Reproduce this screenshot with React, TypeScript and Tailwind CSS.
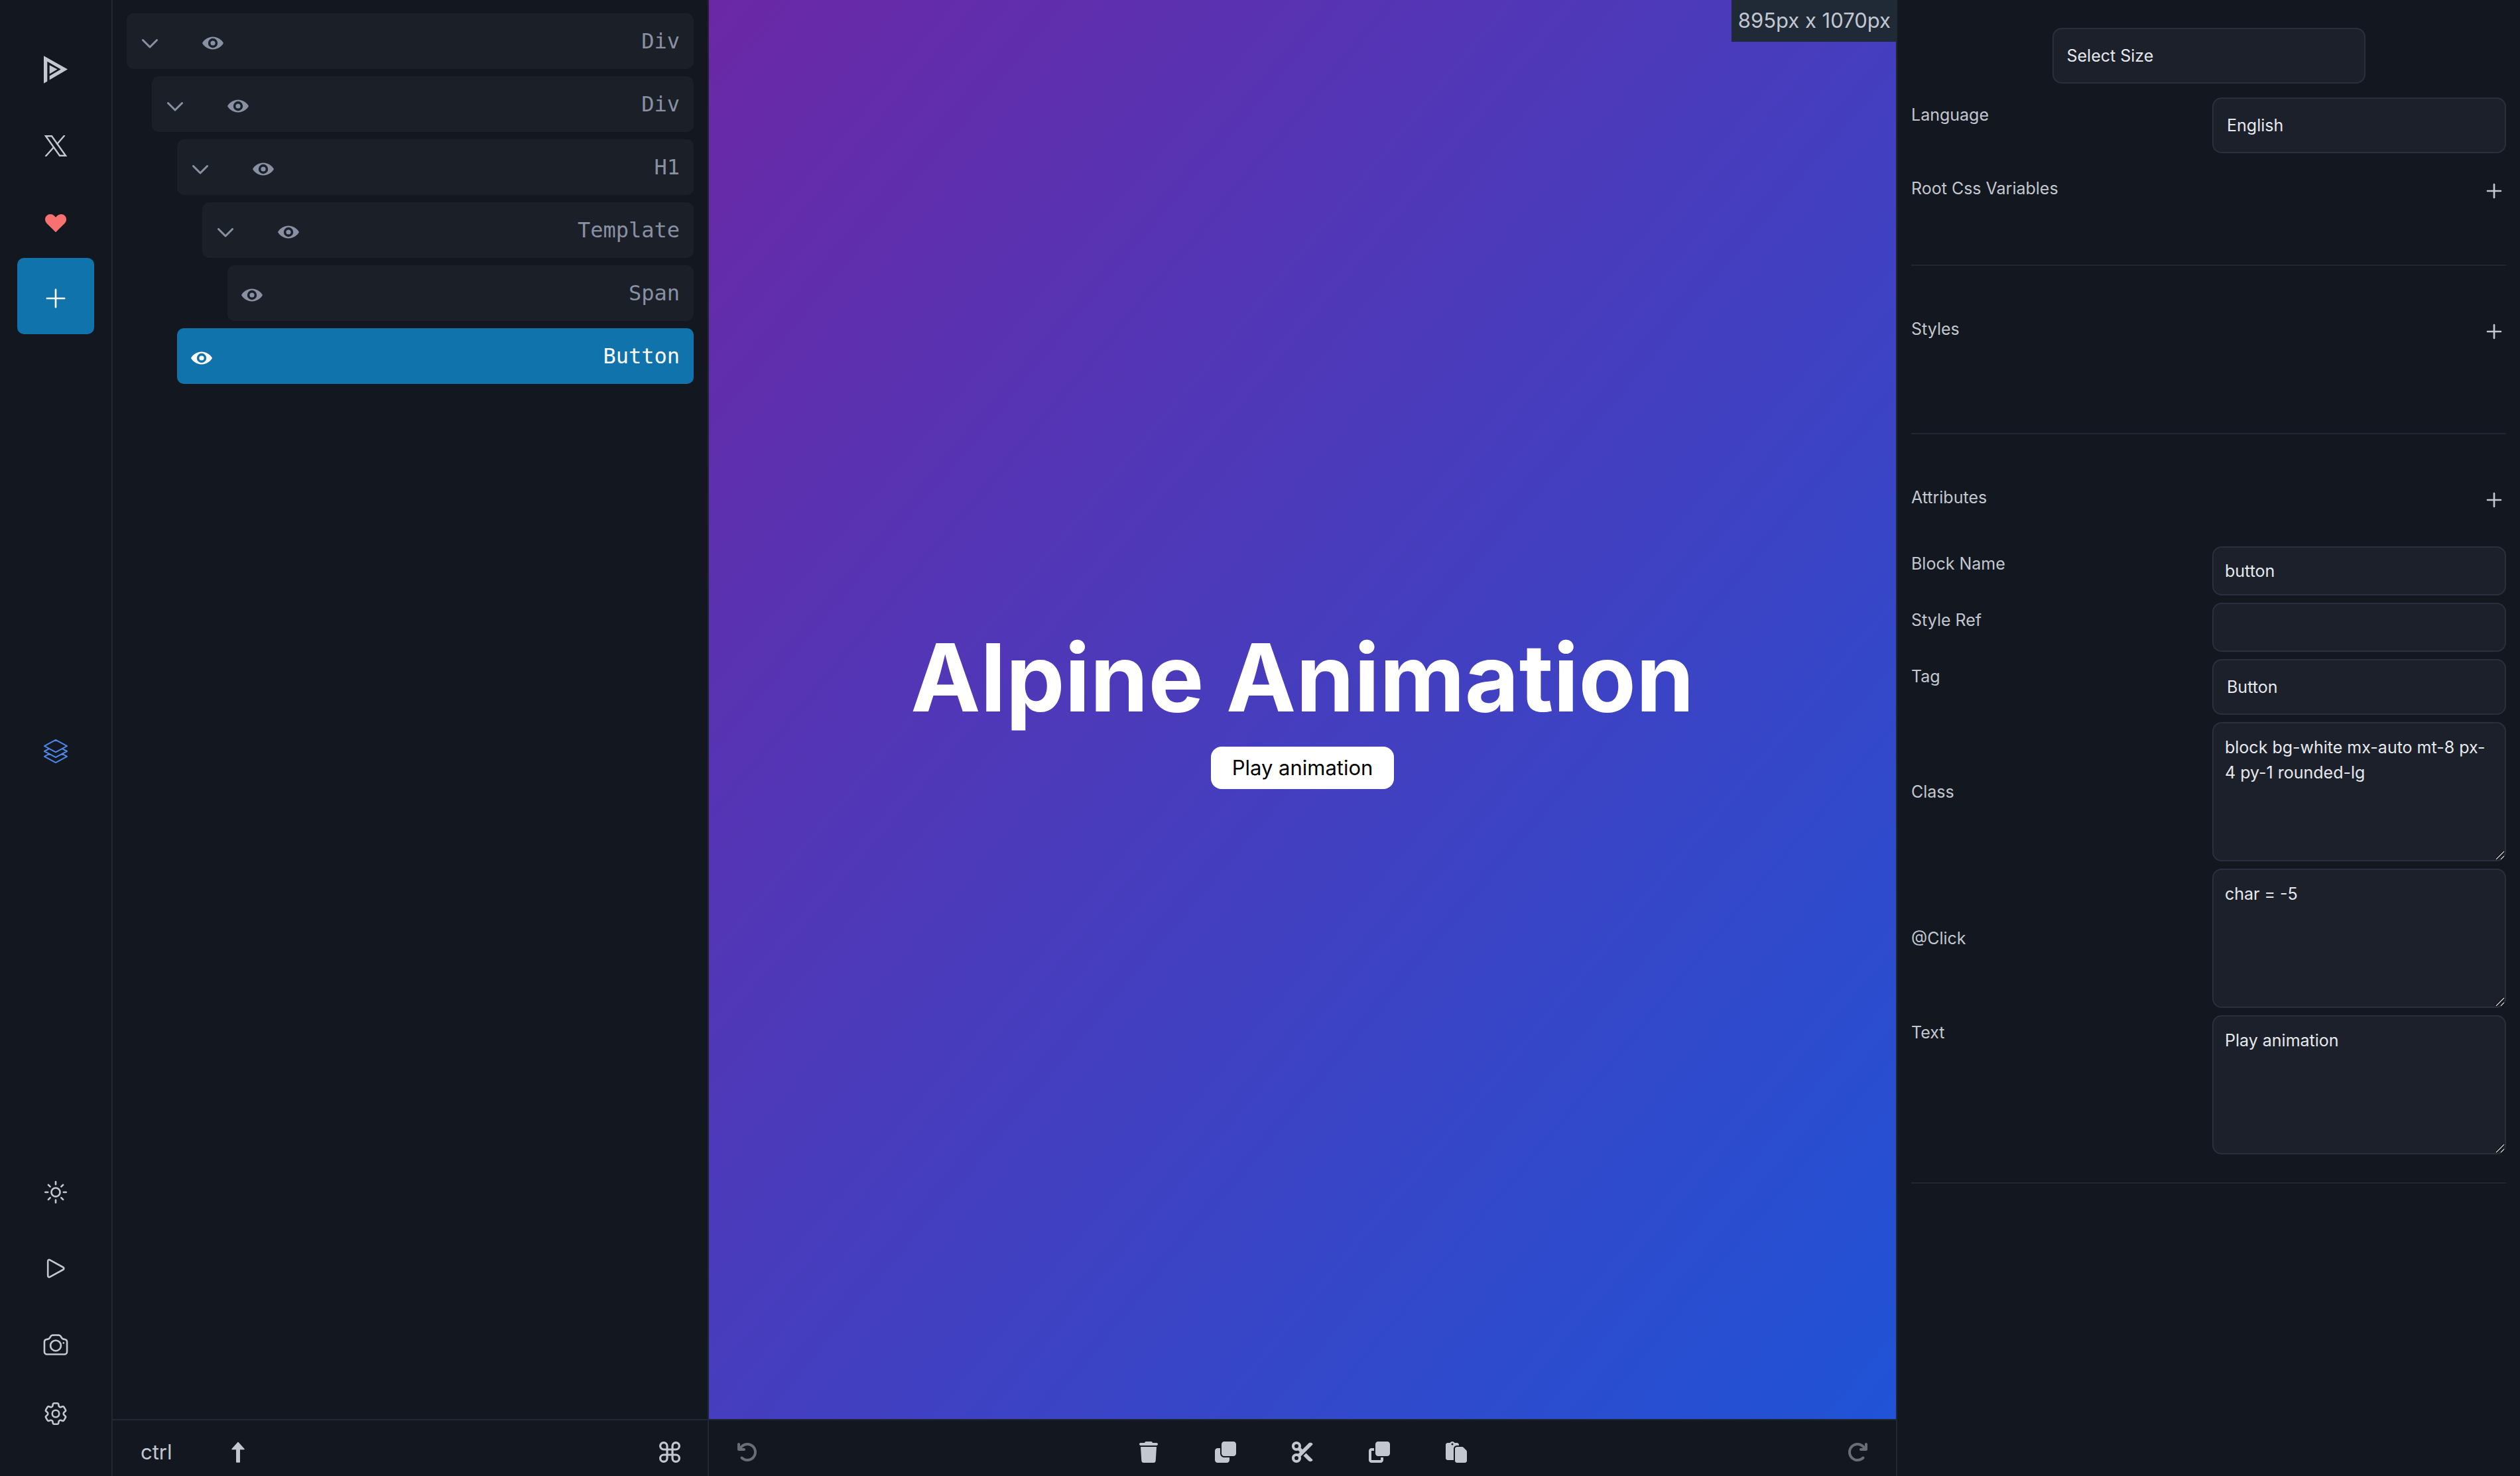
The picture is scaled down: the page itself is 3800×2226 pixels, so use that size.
import React from "react";
import { HiHeart } from "react-icons/hi";
import {
  HiOutlinePlus,
  HiOutlineSquare3Stack3D,
  HiOutlineSun,
  HiOutlinePlay,
  HiOutlineCamera,
  HiOutlineCog6Tooth,
} from "react-icons/hi2";
import {
  FaTrash,
  FaScissors,
  FaPaste,
  FaArrowRotateLeft,
  FaArrowRotateRight,
} from "react-icons/fa6";

type Node = { tag: string; indent: string; leaf?: boolean; selected?: boolean };

const nodes: Node[] = [
  { tag: "Div", indent: "ml-0" },
  { tag: "Div", indent: "ml-[38px]" },
  { tag: "H1", indent: "ml-[76px]" },
  { tag: "Template", indent: "ml-[114px]" },
  { tag: "Span", indent: "ml-[152px]", leaf: true },
  { tag: "Button", indent: "ml-[76px]", leaf: true, selected: true },
];

function Logo() {
  return (
    <svg viewBox="0 0 95 110" className="h-[42px] w-9" fill="currentColor" aria-hidden="true">
      <path d="M0 0L95 54L23 96V80L68 54L14 23V102L0 110Z" />
      <path d="M23 37L54 54L23 72Z" />
    </svg>
  );
}

function XLogo() {
  return (
    <svg viewBox="0 0 36 32" className="h-8 w-9" fill="none" stroke="currentColor" strokeWidth="2.4" aria-hidden="true">
      <path d="M3 1.200H12L33 30.800H24Z" />
      <path d="M31.500 0L19.500 14M2.500 32L15.500 17.500" />
    </svg>
  );
}

function Eye() {
  return (
    <svg viewBox="0 0 32 20" className="h-5 w-8" aria-hidden="true">
      <path
        fill="currentColor"
        fillRule="evenodd"
        d="M0 10C2 6 8 0.500 16 0.500S30 6 32 10C30 14 24 19.500 16 19.500S2 14 0 10ZM16 2.800A7.200 7.200 0 1 0 16 17.200A7.200 7.200 0 1 0 16 2.800ZM16 6.400A3.600 3.600 0 1 1 16 13.600A3.600 3.600 0 1 1 16 6.400Z"
      />
    </svg>
  );
}

function Chevron() {
  return (
    <svg viewBox="0 0 24 14" className="h-[14px] w-6" aria-hidden="true">
      <path d="M1.500 1.500L12 12L22.500 1.500" fill="none" stroke="currentColor" strokeWidth="3" strokeLinecap="round" strokeLinejoin="round" />
    </svg>
  );
}

function CloneIcon() {
  return (
    <svg viewBox="0 0 512 512" className="size-8" fill="currentColor" aria-hidden="true">
      <path d="M0 448c0 35.300 28.700 64 64 64h224c35.300 0 64-28.700 64-64v-64H224c-53 0-96-43-96-96V160H64c-35.300 0-64 28.700-64 64v224zm224-96h224c35.300 0 64-28.700 64-64V64c0-35.300-28.700-64-64-64H224c-35.300 0-64 28.700-64 64v224c0 35.300 28.700 64 64 64z" />
    </svg>
  );
}

function CopyIcon() {
  return (
    <svg viewBox="0 0 512 512" className="size-8" fill="currentColor" aria-hidden="true">
      <path d="M288 448H64V224h64v-64H64c-35.300 0-64 28.700-64 64v224c0 35.300 28.700 64 64 64h224c35.300 0 64-28.700 64-64v-64h-64v64zm-64-96h224c35.300 0 64-28.700 64-64V64c0-35.300-28.700-64-64-64H224c-35.300 0-64 28.700-64 64v224c0 35.300 28.700 64 64 64z" />
    </svg>
  );
}

function ArrowUpIcon() {
  return (
    <svg viewBox="0 0 20 32" className="h-8 w-5" fill="currentColor" stroke="currentColor" strokeWidth="1.5" strokeLinejoin="round" aria-hidden="true">
      <path d="M10 1.500L19 11.500H12.200V31H7.800V11.500H1Z" />
    </svg>
  );
}

function CommandIcon() {
  return (
    <svg viewBox="0 0 32 32" className="size-8" fill="none" stroke="currentColor" strokeWidth="3.2" aria-hidden="true">
      <path d="M12 12H6.800A5.200 5.200 0 1 1 12 6.800V25.200A5.200 5.200 0 1 1 6.800 20H25.200A5.200 5.200 0 1 1 20 25.200V6.800A5.200 5.200 0 1 1 25.200 12Z" />
    </svg>
  );
}

function RailButton({ label, active, children }: { label: string; active?: boolean; children: React.ReactNode }) {
  return (
    <button
      aria-label={label}
      className={
        active
          ? "flex h-[115px] w-[116px] items-center justify-center rounded-[10px] bg-[#1073ab] pt-1.5 text-white"
          : "flex h-[115px] w-[116px] items-center justify-center rounded-[10px] pt-1.5"
      }
    >
      {children}
    </button>
  );
}

function BarButton({ label, dim, children }: { label: string; dim?: boolean; children: React.ReactNode }) {
  return (
    <button
      aria-label={label}
      className={dim ? "flex h-full w-[116px] items-center justify-center pt-3 text-[#696d76]" : "flex h-full w-[116px] items-center justify-center pt-3"}
    >
      {children}
    </button>
  );
}

const box = "block w-full rounded-[14px] border-2 border-[#2a2f3c] bg-[#1c202a] text-[25px] text-[#e6e9ed]";

function SelectBox({ id, value, label }: { id: string; value: string; label?: string }) {
  return (
    <select id={id} aria-label={label} defaultValue={value} className={`${box} h-[84px] appearance-none px-5`}>
      <option value={value}>{value}</option>
    </select>
  );
}

function TextBox({ id, value }: { id: string; value: string }) {
  return <input id={id} type="text" defaultValue={value} className={`${box} h-[74px] px-[17px]`} />;
}

function AreaBox({ id, value }: { id: string; value: string }) {
  return (
    <div className="relative">
      <textarea id={id} defaultValue={value} className={`${box} h-[210px] resize-none px-[17px] py-[17px] leading-[38px]`} />
      <svg viewBox="0 0 14 14" className="absolute right-0.5 bottom-0.5 size-[14px]" aria-hidden="true">
        <path d="M1 13L13 1M8 13L13 8" stroke="#000" strokeWidth="3.500" />
        <path d="M1 13L13 1M8 13L13 8" stroke="#c9ccd3" strokeWidth="1.500" />
      </svg>
    </div>
  );
}

function Field({ id, label, middle, children }: { id: string; label: string; middle?: boolean; children: React.ReactNode }) {
  return (
    <div className="grid grid-cols-[1fr_443px]">
      <label htmlFor={id} className={middle ? "self-center" : "pt-[7px]"}>
        {label}
      </label>
      {children}
    </div>
  );
}

function SectionHead({ title }: { title: string }) {
  return (
    <div className="flex h-[38px] items-center justify-between">
      <h2>{title}</h2>
      <button aria-label={`Add to ${title}`} className="flex w-9 justify-center pt-2">
        <HiOutlinePlus className="size-8" strokeWidth={2} />
      </button>
    </div>
  );
}

export default function App() {
  return (
    <div className="flex h-screen min-h-[1900px] bg-[#13171f] font-['Inter',sans-serif] text-[#c2c7d0]">
      <nav className="flex w-[170px] shrink-0 flex-col items-center justify-between border-r-2 border-[#202632] pt-[44px] pb-[44px]">
        <div className="flex flex-col">
          <RailButton label="Home"><Logo /></RailButton>
          <RailButton label="X"><XLogo /></RailButton>
          <RailButton label="Sponsor"><HiHeart className="size-10 text-[#f87171]" /></RailButton>
          <RailButton label="Add block" active><HiOutlinePlus className="size-[42px]" /></RailButton>
        </div>
        <div className="flex flex-col pt-6">
          <button aria-label="Layers" className="flex h-[116px] w-[116px] items-center justify-center text-[#4d88e8]">
            <HiOutlineSquare3Stack3D className="size-[42px]" strokeWidth={1.2} />
          </button>
        </div>
        <div className="flex flex-col">
          <RailButton label="Theme"><HiOutlineSun className="size-[42px]" /></RailButton>
          <RailButton label="Preview"><HiOutlinePlay className="size-[42px]" /></RailButton>
          <RailButton label="Screenshot"><HiOutlineCamera className="size-[42px]" /></RailButton>
          <button aria-label="Settings" className="flex h-[100px] w-[116px] items-center justify-center">
            <HiOutlineCog6Tooth className="size-[42px]" />
          </button>
        </div>
      </nav>

      <aside className="flex w-[899px] shrink-0 flex-col border-r-2 border-[#202632]">
        <ul className="flex grow flex-col gap-[11px] pt-5 pr-[21px] pl-[21px] font-['DejaVu_Sans_Mono',monospace] text-[32px]">
          {nodes.map((n, i) => (
            <li
              key={i}
              className={`${n.indent} flex h-[84px] items-center rounded-[10px] pr-[21px] pl-[21px] ${
                n.selected ? "bg-[#1073ab] text-white" : "bg-[#1b1f27] text-[#8891a4]"
              }`}
            >
              {!n.leaf && (
                <button aria-label="Collapse" className="mr-[67px] ml-0.5 pt-2">
                  <Chevron />
                </button>
              )}
              <button aria-label="Toggle visibility" className="pt-1.5">
                <Eye />
              </button>
              <span className="ml-auto">{n.tag}</span>
            </li>
          ))}
        </ul>
        <footer className="flex h-[86px] items-center border-t-2 border-[#202632] pt-3 pr-[41px] pl-[42px] text-[31px]">
          <button className="w-[137px] text-left">ctrl</button>
          <button aria-label="Up"><ArrowUpIcon /></button>
          <button aria-label="Command" className="ml-auto"><CommandIcon /></button>
        </footer>
      </aside>

      <main className="flex min-w-0 grow flex-col border-r-2 border-[#202632]">
        <section className="relative flex grow flex-col items-center justify-center gap-8 bg-[linear-gradient(to_bottom_right,#6b28a6,#2053d6)]">
          <h1 className="text-[141px] leading-[144px] font-bold text-white">Alpine Animation</h1>
          <button className="h-16 rounded-2xl bg-white px-8 text-[31px] text-black">Play animation</button>
          <div className="absolute top-0 -right-0.5 flex h-[63px] items-center bg-[#202a37] px-[10px] text-[31px]">895px x 1070px</div>
        </section>
        <footer className="flex h-[86px] justify-between border-t-2 border-[#202632]">
          <BarButton label="Undo" dim><FaArrowRotateLeft className="size-8" /></BarButton>
          <div className="flex">
            <BarButton label="Delete"><FaTrash className="size-8" /></BarButton>
            <BarButton label="Duplicate"><CloneIcon /></BarButton>
            <BarButton label="Cut"><FaScissors className="size-8" /></BarButton>
            <BarButton label="Copy"><CopyIcon /></BarButton>
            <BarButton label="Paste"><FaPaste className="size-8" /></BarButton>
          </div>
          <BarButton label="Redo" dim><FaArrowRotateRight className="size-8" /></BarButton>
        </footer>
      </main>

      <aside className="w-[939px] shrink-0 px-[21px] pt-[42px] text-[25px] leading-[38px]">
        <div className="mx-auto w-[472px]">
          <SelectBox id="size" value="Select Size" label="Screen size" />
        </div>
        <div className="mt-[21px] flex flex-col">
          <Field id="language" label="Language"><SelectBox id="language" value="English" /></Field>
        </div>
        <section className="mt-[34px] h-[136px] border-b-2 border-[#202632]">
          <SectionHead title="Root Css Variables" />
        </section>
        <section className="h-[254px] border-b-2 border-[#202632] pt-[76px]">
          <SectionHead title="Styles" />
        </section>
        <section className="border-b-2 border-[#202632] pt-[76px] pb-[42px]">
          <SectionHead title="Attributes" />
          <div className="mt-[55px] flex flex-col gap-[11px]">
            <Field id="name" label="Block Name"><TextBox id="name" value="button" /></Field>
            <Field id="ref" label="Style Ref"><TextBox id="ref" value="" /></Field>
            <Field id="tag" label="Tag"><SelectBox id="tag" value="Button" /></Field>
            <Field id="class" label="Class" middle><AreaBox id="class" value="block bg-white mx-auto mt-8 px-4 py-1 rounded-lg" /></Field>
            <Field id="click" label="@Click" middle><AreaBox id="click" value="char = -5" /></Field>
            <Field id="text" label="Text"><AreaBox id="text" value="Play animation" /></Field>
          </div>
        </section>
      </aside>
    </div>
  );
}
